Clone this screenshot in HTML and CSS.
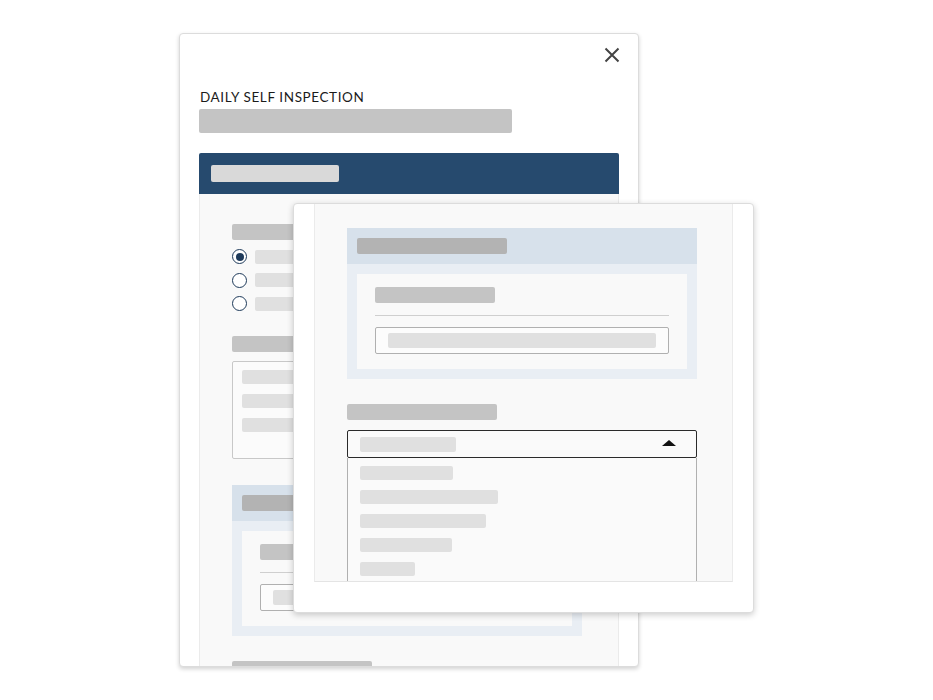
FILE: index.html
```html
<!DOCTYPE html>
<html lang="en">
<head>
<meta charset="utf-8">
<title>Daily Self Inspection</title>
<link rel="stylesheet" href="styles.css">
</head>
<body>
<div class="stage">
  <div class="card card-back">
    <div class="close-row">
      <svg class="close" width="16" height="16" viewBox="0 0 16 16" aria-label="Close">
        <path d="M1.5 1.5 L14.5 14.5 M14.5 1.5 L1.5 14.5" stroke="#444" stroke-width="2" fill="none"/>
      </svg>
    </div>
    <div class="title">DAILY SELF INSPECTION</div>
    <div class="bar bar-title"></div>
    <div class="panel-back">
      <div class="panel-head"><div class="bar bar-head"></div></div>
      <div class="panel-body">
        <div class="bar bar-label"></div>
        <div class="radios">
          <div class="radio-row"><span class="radio checked"></span><span class="bar bar-opt"></span></div>
          <div class="radio-row"><span class="radio"></span><span class="bar bar-opt"></span></div>
          <div class="radio-row"><span class="radio"></span><span class="bar bar-opt"></span></div>
        </div>
        <div class="bar bar-label label-2"></div>
        <div class="textarea">
          <div class="bar bar-line"></div>
          <div class="bar bar-line"></div>
          <div class="bar bar-line"></div>
        </div>
        <div class="section section-back">
          <div class="section-head"><div class="bar bar-sechead"></div></div>
          <div class="section-body">
            <div class="inner">
              <div class="bar bar-inner"></div>
              <div class="rule"></div>
              <div class="input"><div class="bar bar-input"></div></div>
            </div>
          </div>
        </div>
        <div class="bar bar-last"></div>
      </div>
    </div>
  </div>

  <div class="card card-front">
    <div class="panel-front">
      <div class="section">
        <div class="section-head"><div class="bar bar-sechead"></div></div>
        <div class="section-body">
          <div class="inner">
            <div class="bar bar-inner"></div>
            <div class="rule"></div>
            <div class="input"><div class="bar bar-input"></div></div>
          </div>
        </div>
      </div>
      <div class="bar bar-label label-select"></div>
      <div class="select">
        <div class="bar bar-selected"></div>
        <span class="caret"></span>
      </div>
      <div class="dropdown">
        <div class="bar bar-item w1"></div>
        <div class="bar bar-item w2"></div>
        <div class="bar bar-item w3"></div>
        <div class="bar bar-item w4"></div>
        <div class="bar bar-item w5"></div>
      </div>
    </div>
  </div>
</div>
</body>
</html>
```

FILE: styles.css
```css
* { box-sizing: border-box; }
html, body { margin: 0; padding: 0; background: #fff; }
body { font-family: Lato, "Liberation Sans", sans-serif; }

.stage { position: relative; width: 933px; height: 700px; overflow: hidden; background: #fff; }

.card {
  position: absolute;
  background: #fff;
  border: 1px solid #dcdcdc;
  border-radius: 4px;
  overflow: hidden;
}
.card-back {
  left: 179px; top: 33px; width: 460px; height: 634px;
  box-shadow: 0 2px 4px rgba(0,0,0,0.18);
  display: flex; flex-direction: column;
  padding: 0 19px;
}
.card-front {
  left: 293px; top: 203px; width: 461px; height: 410px;
  box-shadow: 0 2px 6px rgba(0,0,0,0.2);
  padding: 0 20px;
}

.bar { border-radius: 2px; flex: none; }

/* back card */
.close-row { display: flex; justify-content: flex-end; padding-top: 13px; margin-right: -1px; height: 29px; }
.close { display: block; }
.title {
  margin-top: 26px;
  font-size: 13.5px; line-height: 16px; letter-spacing: 0.6px;
  color: #1b1b1b; padding-left: 1px;
}
.bar-title { margin-top: 4px; width: 313px; height: 24px; background: #c4c4c4; }

.panel-back { margin-top: 20px; flex: 1; display: flex; flex-direction: column; min-height: 0; }
.panel-head { height: 41px; background: #264a6e; padding: 12px 12px; border-radius: 2px 2px 0 0; }
.bar-head { width: 128px; height: 17px; background: #d9d9d9; }
.panel-body {
  flex: 1; background: #f9f9f9;
  border-left: 1px solid #ebebeb; border-right: 1px solid #ebebeb;
  padding: 30px 36px 0 32px;
  display: flex; flex-direction: column;
}
.bar-label { width: 150px; height: 16px; background: #c4c4c4; }
.radios { margin-top: 9px; display: flex; flex-direction: column; gap: 8.5px; }
.radio-row { display: flex; align-items: center; gap: 8px; height: 15px; }
.radio {
  width: 15px; height: 15px; border-radius: 50%;
  border: 1.5px solid #1e3a5a; background: #fff; flex: none;
  display: flex; align-items: center; justify-content: center;
}
.radio.checked::after { content: ""; width: 8px; height: 8px; border-radius: 50%; background: #1e3a5a; }
.bar-opt { width: 120px; height: 14px; background: #e0e0e0; }
.label-2 { margin-top: 25px; }
.textarea {
  margin-top: 9px; height: 98px; border: 1px solid #c8c8c8; border-radius: 2px;
  background: #fbfbfb; padding: 8px 9px; display: flex; flex-direction: column; gap: 10px;
}
.bar-line { width: 200px; height: 14px; background: #e0e0e0; }
.section-back { margin-top: 26px; }
.bar-last { margin-top: 25px; width: 140px; height: 16px; background: #c4c4c4; }

/* shared section */
.section { width: 350px; flex: none; }
.section-head { height: 36px; background: #d7e1eb; padding: 10px 10px; }
.bar-sechead { width: 150px; height: 16px; background: #b3b3b3; }
.section-body { background: #e9eef4; padding: 10px; }
.inner { background: #f9f9f9; height: 95px; padding: 13px 18px 0 18px; }
.bar-inner { width: 120px; height: 16px; background: #c4c4c4; }
.rule { margin-top: 12px; height: 1px; background: #cfcfcf; }
.input {
  margin-top: 11px; height: 27px; background: #fcfcfc;
  border: 1px solid #b0b0b0; border-radius: 2px; padding: 5px 12px;
}
.bar-input { width: 268px; height: 15px; background: #e0e0e0; }

/* front card */
.panel-front {
  height: 378px; background: #f9f9f9;
  border-left: 1px solid #ebebeb; border-right: 1px solid #ebebeb; border-bottom: 1px solid #e4e4e4;
  padding: 24px 0 0 32px; overflow: hidden;
  display: flex; flex-direction: column;
}
.label-select { margin-top: 25px; }
.select {
  margin-top: 10px; width: 350px; height: 28px; flex: none;
  border: 1.5px solid #2a2a2a; border-radius: 2px; background: #fafafa;
  display: flex; align-items: center; justify-content: space-between;
  padding: 0 20px 0 12px;
}
.bar-selected { width: 96px; height: 15px; background: #e0e0e0; }
.caret {
  width: 0; height: 0;
  border-left: 7px solid transparent; border-right: 7px solid transparent;
  border-bottom: 6px solid #111;
  margin-top: -2px;
}
.dropdown {
  width: 350px; flex: none; height: 140px;
  border: 1px solid #b0b0b0; border-top: none; background: #fafafa;
  padding: 8px 12px 0 12px; display: flex; flex-direction: column; gap: 10px;
}
.bar-item { height: 14px; background: #e0e0e0; }
.w1 { width: 93px; }
.w2 { width: 138px; }
.w3 { width: 126px; }
.w4 { width: 92px; }
.w5 { width: 55px; }
```
